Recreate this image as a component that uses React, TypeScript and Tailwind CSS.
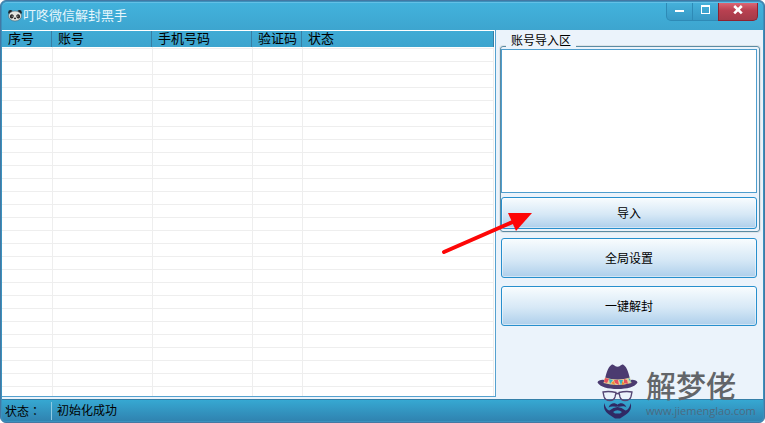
import type { ReactNode } from "react"

const COLUMNS = [
  { label: "序号", width: "w-[50px]" },
  { label: "账号", width: "w-[100px]" },
  { label: "手机号码", width: "w-[100px]" },
  { label: "验证码", width: "w-[50px]" },
  { label: "状态", width: "" },
]

const EMPTY_ROWS = Array.from({ length: 27 }, (_, i) => i)

function PandaIcon() {
  return (
    <svg viewBox="0 0 14 12" className="w-[14px] h-3 shrink-0" aria-hidden="true">
      <circle cx="2.5" cy="2.4" r="2.3" fill="#1b2226" />
      <circle cx="11.5" cy="2.4" r="2.3" fill="#1b2226" />
      <ellipse cx="7" cy="6" rx="6.5" ry="5" fill="#e4e6e0" stroke="#4d626b" strokeWidth="0.6" />
      <ellipse cx="3.8" cy="6.4" rx="1.9" ry="2.2" fill="#2a2a2a" transform="rotate(25 3.8 6.4)" />
      <ellipse cx="10.2" cy="6.4" rx="1.9" ry="2.2" fill="#2a2a2a" transform="rotate(-25 10.2 6.4)" />
      <circle cx="4.2" cy="6.2" r="0.6" fill="#a8a89d" />
      <circle cx="9.8" cy="6.2" r="0.6" fill="#a8a89d" />
      <ellipse cx="7" cy="8.4" rx="1.1" ry="0.8" fill="#2d2d2d" />
    </svg>
  )
}

function TitleBar() {
  return (
    <header className="h-7 shrink-0 flex items-start justify-between bg-linear-to-b from-[#42b2dc] to-[#3da5cf] rounded-t-[5px] border-t border-[#62c0e6]">
      <div className="flex items-center gap-px pl-[6px] h-[25px]">
        <PandaIcon />
        <h1 className="text-[13px] leading-4 text-[#e6f6fc]">叮咚微信解封黑手</h1>
      </div>
      <div className="flex h-[18px] mr-[5px]">
        <button aria-label="最小化" className="w-[27px] flex justify-center border border-t-0 border-[#2e8ab6] rounded-bl-[5px] bg-linear-to-b from-[#45b0da] to-[#3799c5]">
          <svg viewBox="0 0 9 16" className="w-[9px] h-4" aria-hidden="true">
            <path d="M0 7h9v2h-9z" fill="#fff" />
          </svg>
        </button>
        <button aria-label="最大化" className="w-[25px] flex justify-center border-b border-[#2e8ab6] bg-linear-to-b from-[#45b0da] to-[#3799c5]">
          <svg viewBox="0 0 9 16" className="w-[9px] h-4" aria-hidden="true">
            <path d="M0 2h9v9h-9zM1 4v6h7v-6z" fill="#fff" fillRule="evenodd" />
          </svg>
        </button>
        <button aria-label="关闭" className="w-10 flex justify-center border border-t-0 border-[#8e2230] rounded-br-[5px] bg-linear-to-b from-[#da6673] via-[#b84050] via-45% to-[#a33b49]">
          <svg viewBox="0 0 10 16" className="w-[10px] h-4" aria-hidden="true">
            <path d="M1.200 3l7.600 7.400M8.800 3L1.200 10.400" stroke="#fff" strokeWidth="2.6" />
          </svg>
        </button>
      </div>
    </header>
  )
}

function AccountTable() {
  return (
    <div className="flex-1 min-w-0 h-[367px] overflow-hidden bg-white border-r border-b border-[#55a1cf] pr-[1px] pt-px">
      <table className="w-full table-fixed border-separate border-spacing-0">
        <thead>
          <tr className="h-4">
            {COLUMNS.map(({ label, width }) => (
              <th
                key={label}
                className={`${width} h-4 p-0 pl-[6px] text-left text-[13px] leading-4 font-normal text-black whitespace-nowrap bg-linear-to-b from-[#40abd5] to-[#3ca4ce] border-r border-[#377fa5]`}
              >
                {label}
              </th>
            ))}
          </tr>
        </thead>
        <tbody>
          <tr>
            {COLUMNS.map(({ label }) => (
              <td key={label} className="h-[2px] p-0 border-l border-b border-[#eeeeee] first:border-l-0 last:border-r" />
            ))}
          </tr>
          {EMPTY_ROWS.map((row) => (
            <tr key={row}>
              {COLUMNS.map(({ label }) => (
                <td key={label} className="h-[13px] p-0 border-l border-b border-[#eeeeee] first:border-l-0 last:border-r" />
              ))}
            </tr>
          ))}
        </tbody>
      </table>
    </div>
  )
}

function PanelButton({ tall = false, children }: { tall?: boolean; children: ReactNode }) {
  return (
    <button
      className={`${tall ? "h-10" : "h-8"} block w-full pt-px text-xs text-black rounded-[3px] border border-[#278fcd] bg-linear-to-b from-[#f8fcfe] via-[#d6e8f6] via-55% to-[#aecfeb] shadow-[inset_0_0_0_1px_rgba(255,255,255,0.45)]`}
    >
      {children}
    </button>
  )
}

function SidePanel() {
  return (
    <aside className="w-[267px] shrink-0 pt-4 pl-1 pr-[3px]">
      <fieldset className="relative min-w-0 pt-[2px] pr-[2px] pb-[2px] rounded-[3px] border border-[#5b8ba3] shadow-[0_0_0_1px_rgba(215,220,222,0.7)]">
        <legend className="absolute -top-[15px] left-[5px] h-[17px] px-[5px] text-xs leading-[18px] text-black bg-[#ebf3fb]">
          <label htmlFor="accounts">账号导入区</label>
        </legend>
        <textarea id="accounts" className="block w-full h-36 resize-none bg-white border border-[#4e9dcd] outline-none text-xs" />
        <div className="mt-1">
          <PanelButton>导入</PanelButton>
        </div>
      </fieldset>
      <div className="flex flex-col gap-2 mt-[6px] pl-px pr-[3px]">
        <PanelButton tall>全局设置</PanelButton>
        <PanelButton tall>一键解封</PanelButton>
      </div>
    </aside>
  )
}

function StatusBar() {
  return (
    <footer className="h-[22px] shrink-0 flex items-center border-t border-[#347fa8] bg-linear-to-b from-[#36a8d2] to-[#3083b0] rounded-b-[4px] text-xs text-black">
      <span className="w-[49px] pl-[3px] leading-[18px] whitespace-nowrap font-['Noto_Sans_CJK_TC',sans-serif]">状态：</span>
      <span className="pl-[5px] leading-[18px] border-l border-[#8fcbe3]">初始化成功</span>
    </footer>
  )
}

// Red pointer towards the import button
function Arrow() {
  return (
    <svg viewBox="0 0 92 42" className="absolute right-[231px] top-[211px] w-[92px] h-[42px] pointer-events-none" aria-hidden="true">
      <path d="M3 40L74 9" stroke="#fd0606" strokeWidth="4" strokeLinecap="round" />
      <path d="M91 1H67L75 19z" fill="#fd0606" />
    </svg>
  )
}

function Watermark() {
  return (
    <div className="absolute right-[7px] bottom-[3px] flex gap-2 pointer-events-none">
      <svg viewBox="0 0 41 55" className="w-[41px] h-[55px]" aria-hidden="true">
        <path d="M7.500 17C9 10 11 3 14 1.200C15 0 16.500 0.800 18 2Q20.500 3.400 23 2C24.500 0.800 26 0 27 1.200C30 3 32 10 33.500 17z" fill="#4b3b70" />
        <path d="M0.500 18.500C1 16 6 15 9 16.500H32C35 15 40 16 40.500 18.500C38 23 30 25 20.500 25S3 23 0.500 18.500z" fill="#4b3b70" />
        <path d="M8 13.500Q20.500 17.500 33 13.500L34.500 19Q20.500 23 6.500 19z" fill="#e3cf9b" />
        <path d="M8 14l4 1-2 4-3-1zM17 16l4 0 1 5-4-2zM27 15l3 1 1 4-4-1z" fill="#e64f5d" />
        <path d="M12 15l4 1-3 4zM22 16l4 0-2 5zM31 14l2 1 1 4z" fill="#37b3c0" />
        <path d="M14 19l3-2 1 4zM25 17l3 3-3 1z" fill="#f08b33" />
        <path d="M6 28Q12 26.800 19 28.500L18 33Q17 36.500 13 36.500Q8 36.500 7 32.500zM35 28Q29 26.800 22 28.500L23 33Q24 36.500 28 36.500Q33 36.500 34 32.500zM19 30Q20.500 29 22 30" fill="none" stroke="#534573" strokeWidth="1.3" />
        <path fillRule="evenodd" d="M7.500 39C8 43 10 46 12.500 46.500Q20.500 39.500 28.500 46.500C31 46 33 43 33.500 39C35 43 33.500 47.500 29 50.500L23 54.500H18L12 50.500C7.500 47.500 6 43 7.500 39zM16 48Q20.500 44.500 25 48L23 49.500H18z" fill="#302964" />
        <path d="M11.500 43.500C13.500 38.500 18 38.500 20.500 40.800C23 38.500 27.500 38.500 29.500 43.500C26 41 23 43.500 20.500 42.500C18 43.500 15 41.500 11.500 43.500z" fill="#302964" />
      </svg>
      <div className="flex flex-col w-[111px] pt-[5px] text-[#626569]">
        <span className="text-[30px] leading-9 font-medium whitespace-nowrap">解梦佬</span>
        <span className="text-[11px] leading-3 whitespace-nowrap font-['Open_Sans',sans-serif] text-[#4b6b82]">www.jiemenglao.com</span>
      </div>
    </div>
  )
}

export default function App() {
  return (
    <div className="bg-white min-h-screen flex font-['Liberation_Sans','Noto_Sans_CJK_SC',sans-serif]">
      <div className="relative flex-1 flex flex-col rounded-[6px] border border-[#4378a3] bg-[#3b91bd] p-px">
        <TitleBar />
        <main className="flex-1 flex items-start bg-[#ebf3fb]">
          <AccountTable />
          <SidePanel />
        </main>
        <StatusBar />
        <Arrow />
        <Watermark />
      </div>
    </div>
  )
}
